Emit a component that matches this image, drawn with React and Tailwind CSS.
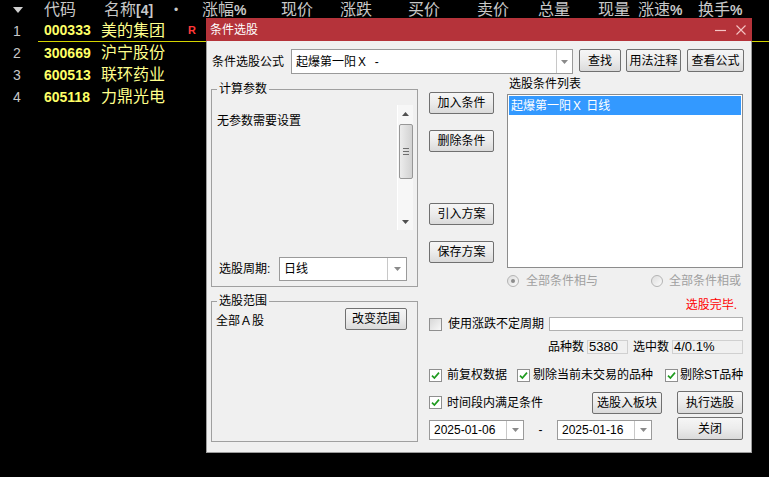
import React from "react";

const btn =
  "flex items-center justify-center border border-[#707070] rounded-[2px] bg-linear-to-b from-[#f6f6f6] via-[#ececec] to-[#dadada] text-[12px] leading-none text-black";

function Button({ className = "", children }) {
  return <div className={`${btn} ${className}`}>{children}</div>;
}

function Arrow() {
  return (
    <svg width="7" height="4" viewBox="0 0 7 4">
      <path d="M0 0h7L3.5 4z" fill="#8a8a8a" />
    </svg>
  );
}

function Combo({ className = "", text, drop = "w-[16px]" }) {
  return (
    <div className={`flex bg-white border border-[#9a9a9a] ${className}`}>
      <div className="flex-1 flex items-center pl-[4px] text-[12px] leading-none whitespace-pre">{text}</div>
      <div className={`${drop} border-l border-[#c8c8c8] flex items-center justify-center`}>
        <Arrow />
      </div>
    </div>
  );
}

function Check({ checked }) {
  return (
    <div
      className={`w-[13px] h-[13px] shrink-0 border border-[#8f8f8f] flex items-center justify-center ${
        checked ? "bg-white" : "bg-linear-to-br from-[#d8d8d8] to-[#f8f8f8]"
      }`}
    >
      {checked && (
        <svg width="9" height="9" viewBox="0 0 9 9">
          <path d="M1 4.6 L3.4 7 L8 1.6" stroke="#1f9b1f" strokeWidth="1.7" fill="none" />
        </svg>
      )}
    </div>
  );
}

function Radio({ on }) {
  return (
    <div className="w-[12px] h-[12px] shrink-0 rounded-full border border-[#b4b4b4] bg-linear-to-br from-[#dedede] to-[#fafafa] flex items-center justify-center">
      {on && <div className="w-[4px] h-[4px] rounded-full bg-[#8c8c8c]" />}
    </div>
  );
}

function ScrollBar() {
  return (
    <div className="w-[16px] h-[125px] bg-[#f7f7f7] border-l border-white flex flex-col items-center">
      <svg width="7" height="4" viewBox="0 0 7 4" className="mt-[7px]">
        <path d="M3.5 0L7 4H0z" fill="#505050" />
      </svg>
      <div className="mt-[8px] w-[14px] h-[55px] border border-[#979797] rounded-[2px] bg-linear-to-r from-[#ececec] to-[#d2d2d2] flex flex-col items-center justify-center gap-[2px]">
        <div className="w-[6px] h-px bg-[#6e6e6e]" />
        <div className="w-[6px] h-px bg-[#6e6e6e]" />
        <div className="w-[6px] h-px bg-[#6e6e6e]" />
      </div>
      <svg width="7" height="4" viewBox="0 0 7 4" className="mt-[41px]">
        <path d="M0 0h7L3.5 4z" fill="#505050" />
      </svg>
    </div>
  );
}

const stocks = [
  ["1", "000333", "美的集团"],
  ["2", "300669", "沪宁股份"],
  ["3", "600513", "联环药业"],
  ["4", "605118", "力鼎光电"],
];

export default function App() {
  return (
    <div className="relative w-[769px] h-[477px] bg-black overflow-hidden font-['Liberation_Sans','Noto_Sans_CJK_SC',sans-serif]">
      {/* 行情列表 */}
      <div className="flex h-[20px] items-center pl-[13px] text-[#c8c8c8] text-[16px] leading-none whitespace-nowrap">
        <div className="w-[31px]">
          <svg width="10" height="6" viewBox="0 0 10 6">
            <path d="M0 0h10L5 6z" fill="#d0d0d0" />
          </svg>
        </div>
        <div className="w-[60px]">代码</div>
        <div className="w-[70px]">
          名称<span className="font-bold text-[14px]">[4]</span>
        </div>
        <div className="w-[28px] text-[12px]">•</div>
        <div className="w-[79px]">
          涨幅<span className="font-bold text-[14px]">%</span>
        </div>
        <div className="w-[59px]">现价</div>
        <div className="w-[68px]">涨跌</div>
        <div className="w-[69px]">买价</div>
        <div className="w-[61px]">卖价</div>
        <div className="w-[60px]">总量</div>
        <div className="w-[40px]">现量</div>
        <div className="w-[60px]">
          涨速<span className="font-bold text-[14px]">%</span>
        </div>
        <div>
          换手<span className="font-bold text-[14px]">%</span>
        </div>
      </div>
      {stocks.map(([n, code, name]) => (
        <div key={code} className="flex h-[22px] pl-[13px]">
          <div className="w-[25px] flex items-center text-[14px] text-[#c8c8c8]">{n}</div>
          <div className={`flex-1 flex items-center pl-[6px] ${n === "1" ? "border-b border-[#d4d400]" : ""}`}>
            <div className="w-[57px] text-[14px] font-bold text-[#ffff66]">{code}</div>
            <div className="w-[87px] text-[16px] text-[#ffff8c]">{name}</div>
            {n === "1" && <div className="text-[11px] font-bold text-[#ff3838]">R</div>}
          </div>
        </div>
      ))}

      {/* 条件选股 窗口 */}
      <div className="absolute left-[206px] top-[18px] w-[546px] h-[435px] flex flex-col text-[12px] leading-[14px] text-black">
        <div className="h-[23px] bg-[#b5333a] flex items-center pl-[4px] text-white text-[12px]">
          条件选股
          <div className="ml-auto flex items-center gap-[10px] mr-[6px]">
            <svg width="11" height="10" viewBox="0 0 11 10">
              <path d="M0 5.5h11" stroke="#f4c4c4" strokeWidth="1.2" />
            </svg>
            <svg width="10" height="10" viewBox="0 0 10 10">
              <path d="M0.5 0.5L9.5 9.5M9.5 0.5L0.5 9.5" stroke="#f4c4c4" strokeWidth="1.1" />
            </svg>
          </div>
        </div>

        <div className="flex-1 bg-[#f0f0f0] border-x border-b border-[#9c9c9c]">
          {/* 公式行 */}
          <div className="flex items-start pt-[8px]">
            <div className="ml-[5px] w-[79px] h-[25px] flex items-center">条件选股公式</div>
            <Combo className="w-[282px] h-[25px]" text="起爆第一阳Ｘ  -" />
            <Button className="ml-[6px] w-[42px] h-[23px]">查找</Button>
            <Button className="ml-[5px] w-[55px] h-[23px]">用法注释</Button>
            <Button className="ml-[6px] w-[57px] h-[23px]">查看公式</Button>
          </div>

          <div className="flex">
            {/* 左列 */}
            <div className="ml-[4px] w-[207px] flex flex-col">
              <fieldset className="mt-[8px] h-[205px] border border-[#a0a0a0] min-w-0">
                <legend className="ml-[5px] px-[2px] leading-[14px]">计算参数</legend>
                <div className="flex mt-[9px]">
                  <div className="flex-1 pl-[5px] pt-[9px]">无参数需要设置</div>
                  <div className="mr-[4px]">
                    <ScrollBar />
                  </div>
                </div>
                <div className="flex items-center mt-[27px]">
                  <div className="w-[67px] pl-[7px]">选股周期:</div>
                  <Combo className="w-[128px] h-[24px]" text="日线" drop="w-[19px]" />
                </div>
              </fieldset>
              <fieldset className="mt-[7px] h-[148px] border border-[#a0a0a0] min-w-0">
                <legend className="ml-[5px] px-[2px] leading-[14px]">选股范围</legend>
                <div className="flex justify-between items-start">
                  <div className="pl-[4px] pt-[6px]">全部Ａ股</div>
                  <Button className="mr-[10px] w-[62px] h-[22px]">改变范围</Button>
                </div>
              </fieldset>
            </div>

            {/* 右列 */}
            <div className="ml-[11px] w-[314px] flex flex-col">
              <div className="flex">
                <div className="w-[65px] flex flex-col">
                  <Button className="mt-[18px] h-[22px]">加入条件</Button>
                  <Button className="mt-[16px] h-[22px]">删除条件</Button>
                  <Button className="mt-[51px] h-[22px]">引入方案</Button>
                  <Button className="mt-[16px] h-[22px]">保存方案</Button>
                </div>
                <div className="ml-[13px] w-[236px] flex flex-col">
                  <div className="mt-[3px] h-[14px] pl-[2px]">选股条件列表</div>
                  <div className="mt-[3px] h-[174px] bg-white border border-[#8c8c8c] p-px">
                    <div className="h-[19px] bg-[#3399ff] text-white flex items-center pl-[2px] whitespace-pre">
                      起爆第一阳Ｘ 日线
                    </div>
                  </div>
                </div>
              </div>

              <div className="mt-[6px] h-[14px] flex items-center pl-[78px] text-[#a0a0a0]">
                <Radio on />
                <div className="ml-[7px]">全部条件相与</div>
                <div className="ml-[53px]">
                  <Radio />
                </div>
                <div className="ml-[6px]">全部条件相或</div>
              </div>

              <div className="mt-[10px] h-[14px] flex justify-end pr-[6px] text-[#ff0000]">选股完毕.</div>

              <div className="mt-[5px] h-[14px] flex items-center">
                <Check />
                <div className="ml-[6px]">使用涨跌不定周期</div>
                <div className="ml-[5px] w-[194px] h-[14px] bg-white border border-[#b0b0b0]" />
              </div>

              <div className="mt-[9px] h-[14px] flex items-center justify-end">
                <div>品种数</div>
                <div className="ml-[3px] w-[41px] h-[14px] border border-[#d0d0d0] pl-[1px] text-[13px] leading-[12px]">5380</div>
                <div className="ml-[5px]">选中数</div>
                <div className="ml-[3px] w-[71px] h-[14px] border border-[#d0d0d0] pl-[1px] text-[13px] leading-[12px]">4/0.1%</div>
              </div>

              <div className="mt-[14px] h-[14px] flex items-center whitespace-nowrap">
                <Check checked />
                <div className="ml-[5px]">前复权数据</div>
                <div className="ml-[10px]">
                  <Check checked />
                </div>
                <div className="ml-[3px]">剔除当前未交易的品种</div>
                <div className="ml-[12px]">
                  <Check checked />
                </div>
                <div className="ml-[2px]">剔除ST品种</div>
              </div>

              <div className="mt-[9px] h-[23px] flex items-center">
                <Check checked />
                <div className="ml-[5px]">时间段内满足条件</div>
                <Button className="ml-auto w-[70px] h-[22px]">选股入板块</Button>
                <Button className="ml-[15px] w-[66px] h-[23px]">执行选股</Button>
              </div>

              <div className="mt-[3px] h-[23px] flex items-end">
                <Combo className="w-[95px] h-[20px]" text="2025-01-06" drop="w-[17px]" />
                <div className="w-[33px] h-[20px] flex items-center justify-center">-</div>
                <Combo className="w-[95px] h-[20px]" text="2025-01-16" drop="w-[17px]" />
                <Button className="ml-auto w-[66px] h-[23px]">关闭</Button>
              </div>
            </div>
          </div>
        </div>
      </div>
    </div>
  );
}
